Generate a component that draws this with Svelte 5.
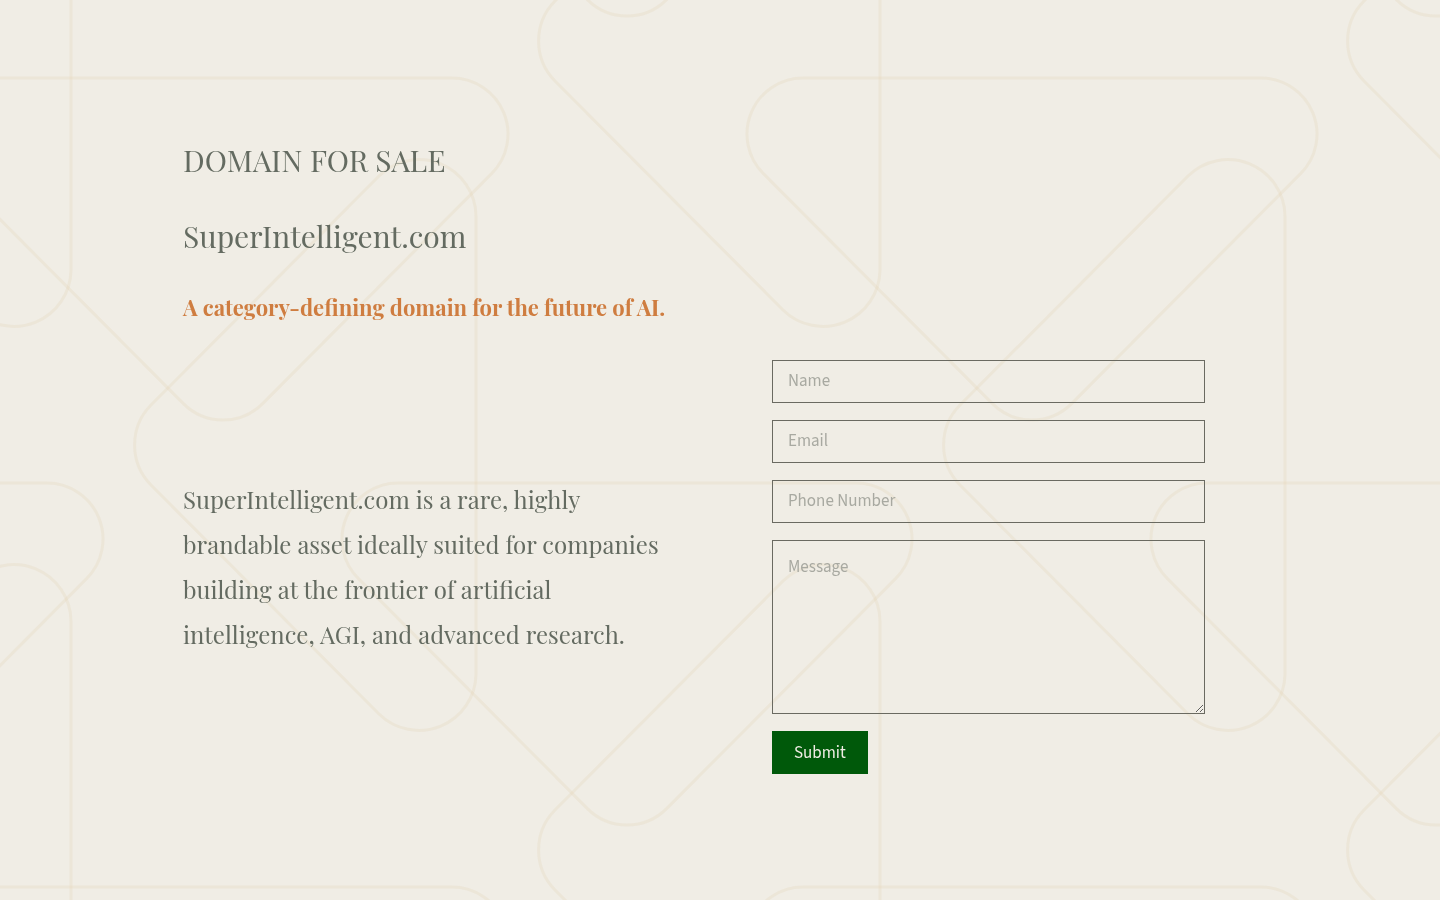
<script lang="ts">
    let name = $state("");
    let email = $state("");
    let phone = $state("");
    let message = $state("");

    // the two outlines repeat every 809px, with a half-step copy in between
    const tile = 809;
    const offsets: number[][] = [];
    for (let row = -1; row < 3; row++) {
        for (let col = -2; col < 3; col++) {
            offsets.push([col * tile, row * tile]);
            offsets.push([col * tile - 405, row * tile + 405]);
        }
    }

    function submit(event: SubmitEvent) {
        event.preventDefault();
    }
</script>

<svg class="backdrop" aria-hidden="true">
    <defs>
        <g id="outlines">
            <path
                d="M803 78 H1261 A56 56 0 0 1 1300.6 173.6 L1071.6 403.6 A56 56 0 0 1 992.4 403.6 L763.4 173.6 A56 56 0 0 1 803 78 Z"
            />
            <path
                d="M1285 216 V674 A57 57 0 0 1 1188 714 L960 485 A57 57 0 0 1 960 405 L1188 176 A57 57 0 0 1 1285 216 Z"
            />
        </g>
    </defs>
    {#each offsets as [x, y]}
        <use href="#outlines" {x} {y} />
    {/each}
</svg>

<main>
    <header>
        <h1>DOMAIN FOR SALE</h1>
        <h2>SuperIntelligent.com</h2>
        <p class="tagline">A category-defining domain for the future of AI.</p>
    </header>

    <section class="content">
        <p class="description">
            SuperIntelligent.com is a rare, highly brandable asset ideally suited for companies
            building at the frontier of artificial intelligence, AGI, and advanced research.
        </p>

        <form onsubmit={submit}>
            <div class="field">
                <input id="name" type="text" placeholder=" " bind:value={name} />
                <label for="name">Name</label>
            </div>
            <div class="field">
                <input id="email" type="email" placeholder=" " bind:value={email} />
                <label for="email">Email</label>
            </div>
            <div class="field">
                <input id="phone" type="tel" placeholder=" " bind:value={phone} />
                <label for="phone">Phone Number</label>
            </div>
            <div class="field">
                <textarea id="message" placeholder=" " bind:value={message}></textarea>
                <label for="message">Message</label>
            </div>
            <button type="submit">Submit</button>
        </form>
    </section>
</main>

<style>
    :global(body) {
        margin: 0;
        background-color: #f0ede5;
    }

    .backdrop {
        position: fixed;
        inset: 0;
        z-index: -1;
        width: 100%;
        height: 100%;
        fill: none;
        stroke: rgba(222, 200, 160, 0.18);
        stroke-width: 3;
    }

    main {
        box-sizing: border-box;
        max-width: 1074px;
        margin: 0 auto;
        padding: 141px 52px 60px 0;
        font-family: "Playfair Display", "Liberation Serif", serif;
        color: #646b61;
    }

    header {
        display: flex;
        flex-direction: column;
        gap: 38px;
    }

    h1,
    h2,
    p {
        margin: 0;
        font-weight: 400;
    }

    h1,
    h2 {
        font-size: 30px;
        line-height: 38px;
    }

    .tagline {
        font-size: 22px;
        line-height: 28px;
        font-weight: 700;
        color: #cf7d40;
    }

    .content {
        display: grid;
        grid-template-columns: 485fr 433fr;
        column-gap: 104px;
        align-items: center;
        margin-top: 39px;
    }

    .description {
        font-size: 24px;
        line-height: 45px;
    }

    form {
        display: flex;
        flex-direction: column;
        align-items: flex-start;
        gap: 17px;
    }

    /* the label shares the input's cell and shows while it is empty */
    .field {
        display: grid;
        width: 100%;
    }

    .field > * {
        grid-area: 1 / 1;
    }

    label,
    input,
    textarea,
    button {
        box-sizing: border-box;
        margin: 0;
        border-radius: 0;
        font-family: "Source Sans Pro", "Source Sans 3", "Noto Sans CJK SC", sans-serif;
        font-size: 17px;
        line-height: 25px;
    }

    label {
        padding: 9px 16px;
        color: #a8a9a1;
        pointer-events: none;
    }

    textarea + label {
        padding-top: 15px;
    }

    input:not(:placeholder-shown) + label,
    textarea:not(:placeholder-shown) + label {
        visibility: hidden;
    }

    input,
    textarea {
        width: 100%;
        padding: 9px 15px;
        border: 1px solid #6a6a61;
        outline: none;
        background: transparent;
        color: #646b61;
    }

    input {
        height: 43px;
    }

    textarea {
        height: 174px;
        padding-top: 14px;
        resize: vertical;
    }

    button {
        height: 43px;
        padding: 1px 22px 0;
        border: none;
        background-color: #00590a;
        color: #f0ede5;
        cursor: pointer;
    }

    button:hover {
        background-color: #00470a;
    }

    @media (max-width: 1000px) {
        main {
            padding: 60px 24px;
        }

        .content {
            grid-template-columns: 1fr;
            row-gap: 38px;
        }
    }
</style>
